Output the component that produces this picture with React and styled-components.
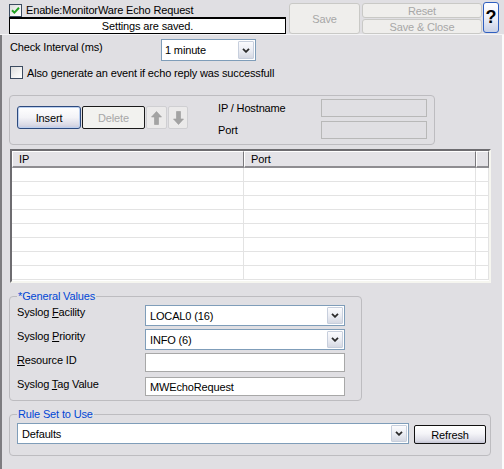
import React from 'react';
import styled, { createGlobalStyle, css } from 'styled-components';

const GlobalStyle = createGlobalStyle`
  html, body {
    margin: 0;
    padding: 0;
    background: #e0dfe3;
  }
  body {
    font-family: "Liberation Sans", Arial, sans-serif;
    font-size: 11px;
    letter-spacing: -0.15px;
    color: #000;
  }
  * {
    box-sizing: border-box;
  }
`;

const Window = styled.div`
  width: 504px;
  height: 469px;
  background: #e0dfe3;
  display: flex;
  flex-direction: column;
  overflow: hidden;
`;

/* ---------- header ---------- */

const Header = styled.div`
  display: flex;
  align-items: flex-start;
  height: 35px;
  padding-left: 9px;
  border-bottom: 1px solid #f4f4f6;
`;

const HeaderLeft = styled.div`
  width: 277px;
  display: flex;
  flex-direction: column;
`;

const CheckRow = styled.label`
  display: flex;
  align-items: center;
  height: ${({ $h }) => $h || 17}px;
  padding-top: ${({ $pt }) => $pt || 0}px;
  margin-top: ${({ $mt }) => $mt || 0}px;
  gap: 4px;
  white-space: nowrap;
`;

const Box = styled.span`
  width: 13px;
  height: 13px;
  flex: none;
  border: 1px solid #3b4b60;
  background: linear-gradient(135deg, #dcdcdc 0%, #f4f4f4 60%, #ffffff 100%);
  display: flex;
  align-items: center;
  justify-content: center;
`;

const StatusBox = styled.div`
  height: 17px;
  background: #fff;
  border: 1px solid #000;
  border-top-width: 2px;
  display: flex;
  align-items: center;
  justify-content: center;
`;

const buttonBase = css`
  display: flex;
  align-items: center;
  justify-content: center;
  font-family: inherit;
  font-size: 11px;
  padding: 0;
  border-radius: 3px;
  white-space: nowrap;
`;

const XpButton = styled.div`
  ${buttonBase}
  width: ${({ $w }) => $w}px;
  height: ${({ $h }) => $h}px;
  margin-left: ${({ $ml }) => $ml || 0}px;
  margin-top: ${({ $mt }) => $mt || 0}px;

  ${({ $variant }) => {
    if ($variant === 'disabled') {
      return css`
        color: #a7a7a7;
        background: #efeeec;
        border: 1px solid #c9c9c6;
      `;
    }
    if ($variant === 'disabledDark') {
      return css`
        color: #a7a7a7;
        background: #f2f2ef;
        border: 1px solid #1a1a1a;
        border-radius: 2px;
      `;
    }
    if ($variant === 'default') {
      return css`
        color: #000;
        background: linear-gradient(#ffffff 0%, #f4f4f8 45%, #dcdce6 85%, #c4c4d4 100%);
        border: 1px solid #111;
        border-radius: 2px;
      `;
    }
    return css`
      color: #000;
      background: linear-gradient(#ffffff 0%, #f3f3f7 50%, #dadae6 85%, #c6c8dc 100%);
      border: 1px solid #2d4a7e;
      box-shadow: inset 0 0 0 1px #bcd0f0;
    `;
  }}
`;

const StackedButtons = styled.div`
  display: flex;
  flex-direction: column;
  gap: 1px;
  margin-left: 2px;
  margin-top: 3px;
`;

const HelpButton = styled.div`
  ${buttonBase}
  width: 16px;
  height: 31px;
  margin-left: 1px;
  margin-top: 2px;
  border: 1px solid #2f5fc0;
  background: linear-gradient(#ffffff 0%, #eef0f8 50%, #c9d1e6 100%);
  font-size: 18px;
  font-weight: bold;
`;

/* ---------- body ---------- */

const Body = styled.div`
  flex: 1;
  display: flex;
  flex-direction: column;
  padding-left: 8px;
  border-left: 2px solid #7d7c80;
  border-right: 2px solid #fbfbfb;
`;

const IntervalRow = styled.div`
  display: flex;
  align-items: flex-start;
  margin-top: 4px;
  height: 22px;
`;

const FieldLabel = styled.span`
  width: ${({ $w }) => $w}px;
  flex: none;
  padding-top: ${({ $pt }) => $pt || 0}px;
  line-height: 13px;
  white-space: nowrap;
`;

const Select = styled.div`
  display: flex;
  width: ${({ $w }) => $w}px;
  height: ${({ $h }) => $h || 21}px;
  background: #fff;
  border: 1px solid #7f9db9;
  flex: none;
`;

const SelectText = styled.div`
  flex: 1;
  display: flex;
  align-items: center;
  padding-left: ${({ $pl }) => $pl || 4}px;
  white-space: nowrap;
`;

const DropButton = styled.div`
  width: 16px;
  margin: 1px;
  border: 1px solid #c7cfdd;
  border-radius: 1px;
  background: linear-gradient(#fbfbfd 0%, #eceef4 50%, #d6d9e3 100%);
  display: flex;
  align-items: center;
  justify-content: center;
`;

const TextInput = styled.div`
  width: ${({ $w }) => $w}px;
  height: ${({ $h }) => $h || 19}px;
  flex: none;
  display: flex;
  align-items: center;
  padding-left: 4px;
  background: ${({ $disabled }) => ($disabled ? 'transparent' : '#fff')};
  border: 1px solid ${({ $disabled }) => ($disabled ? '#b8b8b8' : '#a8a8a8')};
  white-space: nowrap;
`;

/* IP group */
const Group = styled.div`
  display: flex;
  align-items: flex-start;
  width: 426px;
  margin-left: -1px;
  margin-top: 16px;
  padding: 3px 0 5px 7px;
  border: 1px solid #bdbcc0;
  border-radius: 4px;
`;

const ButtonRow = styled.div`
  display: flex;
  gap: 1px;
  margin-top: 7px;
`;

const ArrowButton = styled.div`
  width: ${({ $w }) => $w}px;
  height: 23px;
  display: flex;
  align-items: center;
  justify-content: center;
  background: #ebeaea;
  border: 1px solid #cfcfd2;
  border-radius: 2px;
`;

const HostGrid = styled.div`
  display: grid;
  grid-template-columns: 103px 106px;
  grid-auto-rows: 18px;
  row-gap: 4px;
  align-items: center;
  margin-left: 30px;
`;

/* list view */
const List = styled.div`
  margin-top: 4px;
  width: 481px;
  height: 134px;
  border: 2px solid;
  border-color: #6d6c70 #f6f6f0 #f6f6f0 #6d6c70;
  background: #fff;
  display: flex;
  flex-direction: column;
  overflow: hidden;
`;

const ListGrid = styled.div`
  display: grid;
  grid-template-columns: 232px 232px 13px;
`;

const HeadCell = styled.div`
  height: 17px;
  line-height: 15px;
  padding-left: 6px;
  background: #e4e3e7;
  border-top: 1px solid #fff;
  border-left: 1px solid #fff;
  border-right: 1px solid #7a797d;
  border-bottom: 2px solid #8e8d91;
`;

const Cell = styled.div`
  height: 14px;
  border-bottom: 1px solid #e3e3e3;
  border-right: 1px solid #e3e3e3;
`;

/* fieldsets */
const GroupBox = styled.fieldset`
  margin: ${({ $mt }) => $mt}px 0 0 -1px;
  width: ${({ $w }) => $w}px;
  padding: ${({ $pad }) => $pad};
  border: 1px solid #bdbcc0;
  border-radius: 4px;
  min-width: 0;
`;

const Legend = styled.legend`
  padding: 0 1px;
  color: #0046d5;
  line-height: 13px;
`;

const FormRow = styled.div`
  display: flex;
  align-items: flex-start;
  height: ${({ $h }) => $h}px;
`;

const Underline = styled.span`
  text-decoration: underline;
`;

const RuleRow = styled.div`
  display: flex;
  align-items: flex-start;
  gap: 5px;
`;

/* ---------- icons ---------- */

const Check = () => (
  <svg width="9" height="9" viewBox="0 0 9 9">
    <path d="M1 4.2 L3.4 6.6 L8 1.8" fill="none" stroke="#21a121" strokeWidth="2" />
  </svg>
);

const Chevron = () => (
  <svg width="8" height="5" viewBox="0 0 8 5">
    <path d="M1 0.8 L4 3.8 L7 0.8" fill="none" stroke="#2b2b2b" strokeWidth="1.8" />
  </svg>
);

const Arrow = ({ down }) => (
  <svg width="11" height="14" viewBox="0 0 11 14" style={down ? { transform: 'rotate(180deg)' } : undefined}>
    <path d="M5.5 0.5 L10.5 6 L7.5 6 L7.5 13.5 L3.5 13.5 L3.5 6 L0.5 6 Z" fill="#a3a3a3" stroke="#9a9a9a" strokeWidth="0.6" />
  </svg>
);

const Dropdown = ({ w, h, pl, children }) => (
  <Select $w={w} $h={h}>
    <SelectText $pl={pl}>{children}</SelectText>
    <DropButton>
      <Chevron />
    </DropButton>
  </Select>
);

const ROWS = 8;

export default function App() {
  const rows = Array.from({ length: ROWS });
  return (
    <Window>
      <GlobalStyle />
      <Header>
        <HeaderLeft>
          <CheckRow $pt={3}>
            <Box>
              <Check />
            </Box>
            Enable:MonitorWare Echo Request
          </CheckRow>
          <StatusBox>Settings are saved.</StatusBox>
        </HeaderLeft>
        <XpButton $variant="disabled" $w={71} $h={31} $ml={3} $mt={3}>
          Save
        </XpButton>
        <StackedButtons>
          <XpButton $variant="disabled" $w={120} $h={15}>
            Reset
          </XpButton>
          <XpButton $variant="disabled" $w={120} $h={15}>
            Save &amp; Close
          </XpButton>
        </StackedButtons>
        <HelpButton>?</HelpButton>
      </Header>

      <Body>
        <IntervalRow>
          <FieldLabel $w={151} $pt={2}>
            Check Interval (ms)
          </FieldLabel>
          <Dropdown w={95} h={22} pl={3}>
            1 minute
          </Dropdown>
        </IntervalRow>

        <CheckRow $h={13} $mt={5}>
          <Box />
          Also generate an event if echo reply was successfull
        </CheckRow>

        <Group>
          <ButtonRow>
            <XpButton $w={64} $h={23}>
              Insert
            </XpButton>
            <XpButton $variant="disabledDark" $w={63} $h={23}>
              Delete
            </XpButton>
            <ArrowButton $w={21}>
              <Arrow />
            </ArrowButton>
            <ArrowButton $w={20}>
              <Arrow down />
            </ArrowButton>
          </ButtonRow>
          <HostGrid>
            <FieldLabel>IP / Hostname</FieldLabel>
            <TextInput $disabled $w={106} $h={18} />
            <FieldLabel>Port</FieldLabel>
            <TextInput $disabled $w={106} $h={18} />
          </HostGrid>
        </Group>

        <List>
          <ListGrid>
            <HeadCell>IP</HeadCell>
            <HeadCell>Port</HeadCell>
            <HeadCell />
            {rows.map((_, i) => (
              <React.Fragment key={i}>
                <Cell />
                <Cell />
                <Cell />
              </React.Fragment>
            ))}
          </ListGrid>
        </List>

        <GroupBox $mt={7} $w={353} $pad="2px 0 4px 7px">
          <Legend>*General Values</Legend>
          <FormRow $h={24}>
            <FieldLabel $w={128} $pt={1}>
              Syslog <Underline>F</Underline>acility
            </FieldLabel>
            <Dropdown w={200}>LOCAL0 (16)</Dropdown>
          </FormRow>
          <FormRow $h={24}>
            <FieldLabel $w={128} $pt={1}>
              Syslog <Underline>P</Underline>riority
            </FieldLabel>
            <Dropdown w={200}>INFO (6)</Dropdown>
          </FormRow>
          <FormRow $h={24}>
            <FieldLabel $w={128} $pt={1}>
              <Underline>R</Underline>esource ID
            </FieldLabel>
            <TextInput $w={200} />
          </FormRow>
          <FormRow $h={19}>
            <FieldLabel $w={128} $pt={1}>
              Syslog <Underline>T</Underline>ag Value
            </FieldLabel>
            <TextInput $w={200}>MWEchoRequest</TextInput>
          </FormRow>
        </GroupBox>

        <GroupBox $mt={7} $w={482} $pad="2px 4px 11px 7px">
          <Legend>Rule Set to Use</Legend>
          <RuleRow>
            <Dropdown w={392}>Defaults</Dropdown>
            <XpButton $variant="default" $w={72} $h={19} $mt={2}>
              Refresh
            </XpButton>
          </RuleRow>
        </GroupBox>
      </Body>
    </Window>
  );
}
